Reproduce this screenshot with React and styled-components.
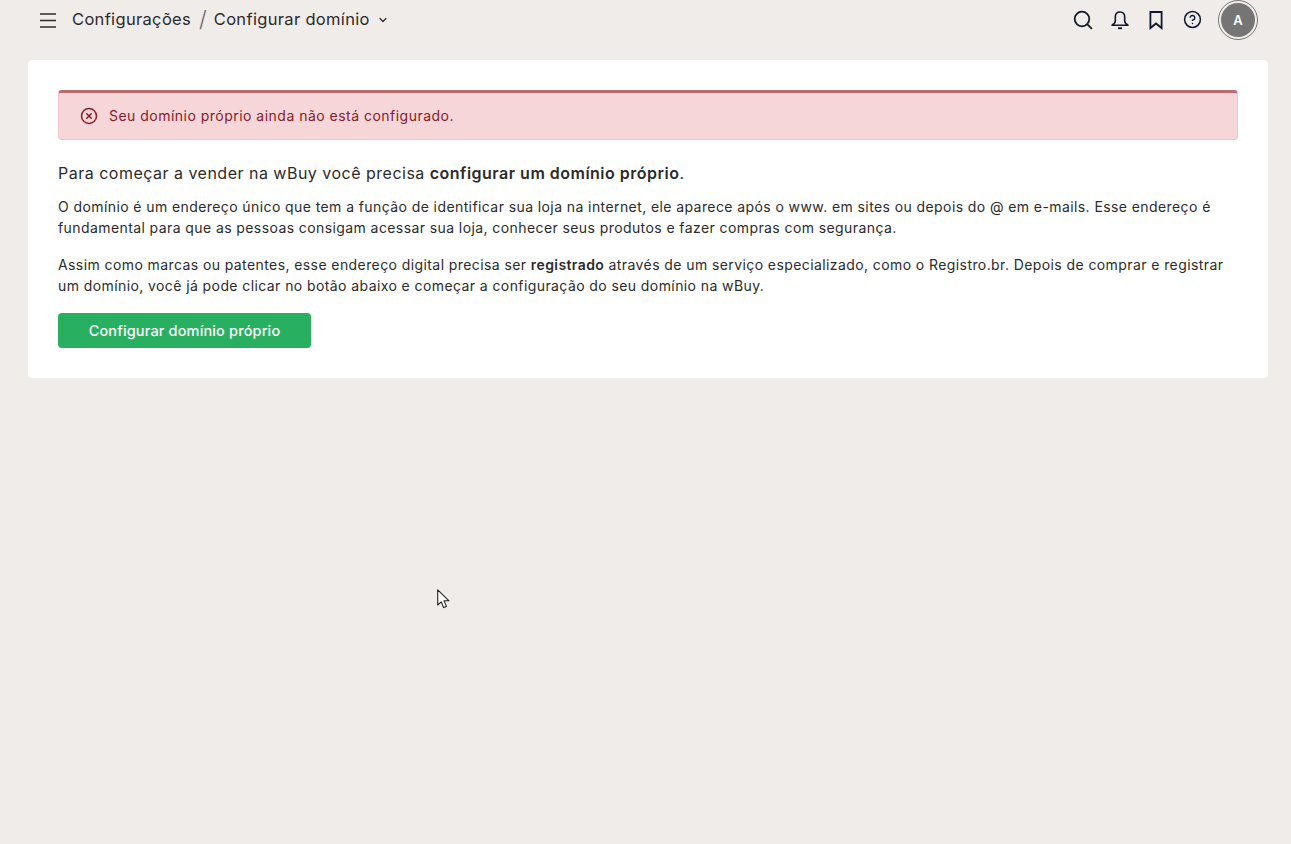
import React from "react";
import styled, { createGlobalStyle } from "styled-components";
import { ChevronDown, CircleHelp, CircleX } from "lucide-react";

const GlobalStyle = createGlobalStyle`
  html, body {
    margin: 0;
    padding: 0;
    height: 100%;
    background: #f0ecea;
    font-family: "Inter", "Liberation Sans", sans-serif;
    color: #212529;
  }
  * {
    box-sizing: border-box;
  }
`;

const Page = styled.div`
  position: relative;
  height: 844px;
  overflow: hidden;
`;

const Header = styled.header`
  height: 60px;
  padding: 0 33px 21px 36px;
  display: flex;
  align-items: center;
  justify-content: space-between;
`;

const Left = styled.div`
  display: flex;
  align-items: center;
`;

const MenuButton = styled.span`
  display: flex;
  color: #2b2b2b;
  margin-right: 12px;
`;

const Crumb = styled.span`
  font-size: 16.5px;
  color: #2b2b2b;
  letter-spacing: 0.33px;
  padding-bottom: 2px;
`;

const Slash = styled.span`
  font-size: 22px;
  font-weight: 300;
  color: #666;
  margin: 0 7px 2px 8px;
`;

const Caret = styled.span`
  display: flex;
  margin-left: 7px;
  color: #2b2b2b;
`;

const Right = styled.div`
  display: flex;
  align-items: center;
`;

const IconButton = styled.span`
  display: flex;
  color: #10182b;
  margin-right: ${(p) => p.$gap}px;
`;

const AvatarRing = styled.div`
  width: 40px;
  height: 40px;
  border-radius: 50%;
  border: 1px solid #777;
  padding: 2px;
`;

const Avatar = styled.div`
  width: 100%;
  height: 100%;
  border-radius: 50%;
  background: #757575;
  color: #fff;
  font-size: 13px;
  font-weight: 600;
  display: flex;
  align-items: center;
  justify-content: center;
`;

const Card = styled.main`
  margin: 0 23px 0 28px;
  height: 318px;
  padding: 30px;
  background: #fff;
  border-radius: 4px;
`;

const Alert = styled.div`
  height: 50px;
  padding: 0 21px 1px;
  display: flex;
  align-items: center;
  gap: 11px;
  background: #f7d6d9;
  border: 1px solid #f2c6cb;
  border-top: 3px solid #bb6a72;
  border-radius: 4px;
  color: #842029;
  font-size: 14px;
  letter-spacing: 0.48px;
`;

const Lead = styled.p`
  margin: 23px 0 0;
  font-size: 16px;
  line-height: 21px;
  letter-spacing: 0.49px;
  color: #2b2b2b;

  strong {
    font-weight: 600;
  }
`;

const Text = styled.p`
  margin: ${(p) => p.$top}px 0 0;
  font-size: 14px;
  line-height: 21px;
  letter-spacing: 0.41px;
  color: #2b2b2b;

  strong {
    font-weight: 600;
  }
`;

const Button = styled.button`
  display: block;
  width: 253px;
  height: 35px;
  margin-top: 17px;
  padding-bottom: 2px;
  border: 0;
  border-radius: 4px;
  background: #28b060;
  color: #fff;
  font-family: inherit;
  font-size: 14.5px;
  font-weight: 500;
  letter-spacing: 0.15px;
`;

const Pointer = styled.svg`
  position: absolute;
  left: 437px;
  top: 589px;
`;

const MenuIcon = () => (
  <svg width="24" height="24" viewBox="0 0 24 24" fill="none" stroke="currentColor" strokeWidth="1.7">
    <path d="M4 6h16M4 12.5h16M4 19h16" />
  </svg>
);

const SearchIcon = () => (
  <svg width="20" height="20" viewBox="0 0 20 20" fill="none" stroke="currentColor" strokeWidth="1.8" strokeLinecap="round">
    <circle cx="9" cy="9" r="7.3" />
    <path d="M14.4 14.4 18.4 18.4" />
  </svg>
);

const BellIcon = () => (
  <svg width="20" height="20" viewBox="0 0 20 20" fill="none" stroke="currentColor" strokeWidth="1.6" strokeLinejoin="round">
    <path d="M10 2C7 2 5.3 4 5.3 7V11C5.3 12.8 4 14 2 15.2H18C16 14 14.7 12.8 14.7 11V7C14.7 4 13 2 10 2Z" />
    <path d="M8 18.2h4" strokeWidth="1.8" />
  </svg>
);

const BookmarkIcon = () => (
  <svg width="20" height="20" viewBox="0 0 20 20" fill="none" stroke="currentColor" strokeWidth="1.8" strokeLinejoin="miter">
    <path d="M4.4 2H15.6V18L10 13.5 4.4 18Z" />
  </svg>
);

export default function App() {
  return (
    <Page>
      <GlobalStyle />
      <Header>
        <Left>
          <MenuButton>
            <MenuIcon />
          </MenuButton>
          <Crumb>Configurações</Crumb>
          <Slash>/</Slash>
          <Crumb>Configurar domínio</Crumb>
          <Caret>
            <ChevronDown size={12} strokeWidth={2.4} />
          </Caret>
        </Left>
        <Right>
          <IconButton $gap={17}>
            <SearchIcon />
          </IconButton>
          <IconButton $gap={16}>
            <BellIcon />
          </IconButton>
          <IconButton $gap={17}>
            <BookmarkIcon />
          </IconButton>
          <IconButton $gap={16}>
            <CircleHelp size={19} strokeWidth={1.9} />
          </IconButton>
          <AvatarRing>
            <Avatar>A</Avatar>
          </AvatarRing>
        </Right>
      </Header>
      <Card>
        <Alert>
          <CircleX size={18} strokeWidth={2} />
          <span>Seu domínio próprio ainda não está configurado.</span>
        </Alert>
        <Lead>
          Para começar a vender na wBuy você precisa <strong>configurar um domínio próprio</strong>.
        </Lead>
        <Text $top={12}>
          O domínio é um endereço único que tem a função de identificar sua loja na internet, ele aparece após o www. em sites ou depois do @ em e-mails. Esse endereço é fundamental para que as pessoas consigam acessar sua loja, conhecer seus produtos e fazer compras com segurança.
        </Text>
        <Text $top={16}>
          Assim como marcas ou patentes, esse endereço digital precisa ser <strong>registrado</strong> através de um serviço especializado, como o Registro.br. Depois de comprar e registrar um domínio, você já pode clicar no botão abaixo e começar a configuração do seu domínio na wBuy.
        </Text>
        <Button>Configurar domínio próprio</Button>
      </Card>
      <Pointer width="14" height="21" viewBox="0 0 14 21">
        <path d="M0.7 0.8 V16 L4.2 12.8 L6.6 18.6 L9.4 17.4 L7 11.8 H12 Z" fill="#fff" stroke="#222" strokeWidth="1.1" strokeLinejoin="round" />
      </Pointer>
    </Page>
  );
}
